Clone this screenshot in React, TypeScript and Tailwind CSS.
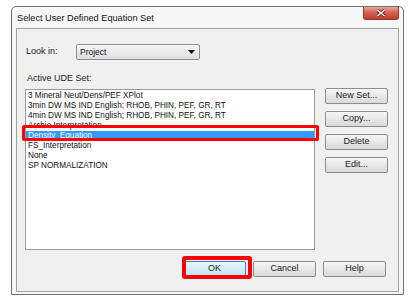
const items = [
  '3 Mineral Neut/Dens/PEF XPlot',
  '3min DW MS IND English; RHOB, PHIN, PEF, GR, RT',
  '4min DW MS IND English; RHOB, PHIN, PEF, GR, RT',
  'Archie Interpretation',
  'Density_Equation',
  'FS_Interpretation',
  'None',
  'SP NORMALIZATION',
]

const selected = 'Density_Equation'

function WinButton({ label, primary }: { label: string; primary?: boolean }) {
  return (
    <div
      className={
        primary
          ? 'flex h-[16px] w-[63px] items-center justify-center rounded-[2px] border border-[#3c7fb1] bg-linear-to-b from-[#eaf6fd] to-[#bfe4f8] text-[9px] text-[#222]'
          : 'flex h-[16px] w-[63px] items-center justify-center rounded-[2px] border border-[#8e8e8e] bg-linear-to-b from-[#f6f6f6] to-[#d9d9d9] text-[9px] text-[#222]'
      }
    >
      {label}
    </div>
  )
}

export default function App() {
  return (
    <div className="relative h-[302px] w-[408px] overflow-hidden bg-white font-['Liberation_Sans',Arial,sans-serif]">
      <div className="ml-[11px] mt-[6px] flex h-[289px] w-[393px] flex-col rounded-t-[5px] border border-[#707070] bg-[#f7f7f7] px-[4px] pb-[2px]">
        {/* title bar */}
        <div className="flex h-[21px] items-start justify-between">
          <span className="mt-[5px] pl-[1px] text-[9.2px] leading-[12px] text-[#111]">
            Select User Defined Equation Set
          </span>
          <div className="flex h-[13px] w-[36px] items-center justify-center rounded-b-[3px] border border-t-0 border-[#8d3b2f] bg-linear-to-b from-[#e9a596] via-[#d25f4c] to-[#c23b2a]">
            <svg width="10" height="8" viewBox="0 0 10 8">
              <path d="M1.5 1 L8.5 7 M8.5 1 L1.5 7" stroke="#5a1a12" strokeWidth="3" />
              <path d="M1.5 1 L8.5 7 M8.5 1 L1.5 7" stroke="#fff" strokeWidth="1.6" />
            </svg>
          </div>
        </div>

        {/* client area */}
        <div className="flex flex-1 flex-col border border-[#a3a3a3] bg-[#f0f0f0] pl-[8px] pr-[10px]">
          <div className="mt-[15px] flex items-center">
            <span className="w-[51px] pl-[1px] text-[9px] text-[#222]">Look in:</span>
            <div className="flex h-[16px] w-[124px] items-center justify-between rounded-[2px] border border-[#8e8e8e] bg-linear-to-b from-[#f6f6f6] to-[#dedede] pl-[3px] pr-[4px]">
              <span className="text-[8.5px] text-[#111]">Project</span>
              <svg width="7" height="4" viewBox="0 0 7 4">
                <path d="M0 0 H7 L3.5 4 Z" fill="#111" />
              </svg>
            </div>
          </div>

          <div className="mt-[12px] pl-[2px] text-[9px] leading-[12px] text-[#222]">Active UDE Set:</div>

          <div className="mt-[5px] flex items-start gap-[10px]">
            <div className="h-[161px] w-[293px] border border-[#9a9a9a] bg-white pt-[1px]">
              {items.map((item) => (
                <div
                  key={item}
                  className={
                    item === selected
                      ? 'h-[10px] bg-[#3399ff] pl-[2px] text-[8.2px] leading-[10px] text-white'
                      : 'h-[10px] pl-[2px] text-[8.2px] leading-[10px] text-[#111]'
                  }
                >
                  {item}
                </div>
              ))}
            </div>
            <div className="-mt-[1px] flex flex-col gap-[7px]">
              <WinButton label="New Set..." />
              <WinButton label="Copy..." />
              <WinButton label="Delete" />
              <WinButton label="Edit..." />
            </div>
          </div>

          <div className="mr-[2px] mt-[11px] flex justify-end gap-[7px]">
            <WinButton label="OK" primary />
            <WinButton label="Cancel" />
            <WinButton label="Help" />
          </div>
        </div>
      </div>

      {/* red annotation boxes */}
      <div className="absolute left-[22px] top-[125px] h-[16px] w-[297px] rounded-[2px] border-[3px] border-[#ff0000]" />
      <div className="absolute left-[182px] top-[256px] h-[23px] w-[70px] rounded-[3px] border-[4px] border-[#ff0000]" />
    </div>
  )
}
